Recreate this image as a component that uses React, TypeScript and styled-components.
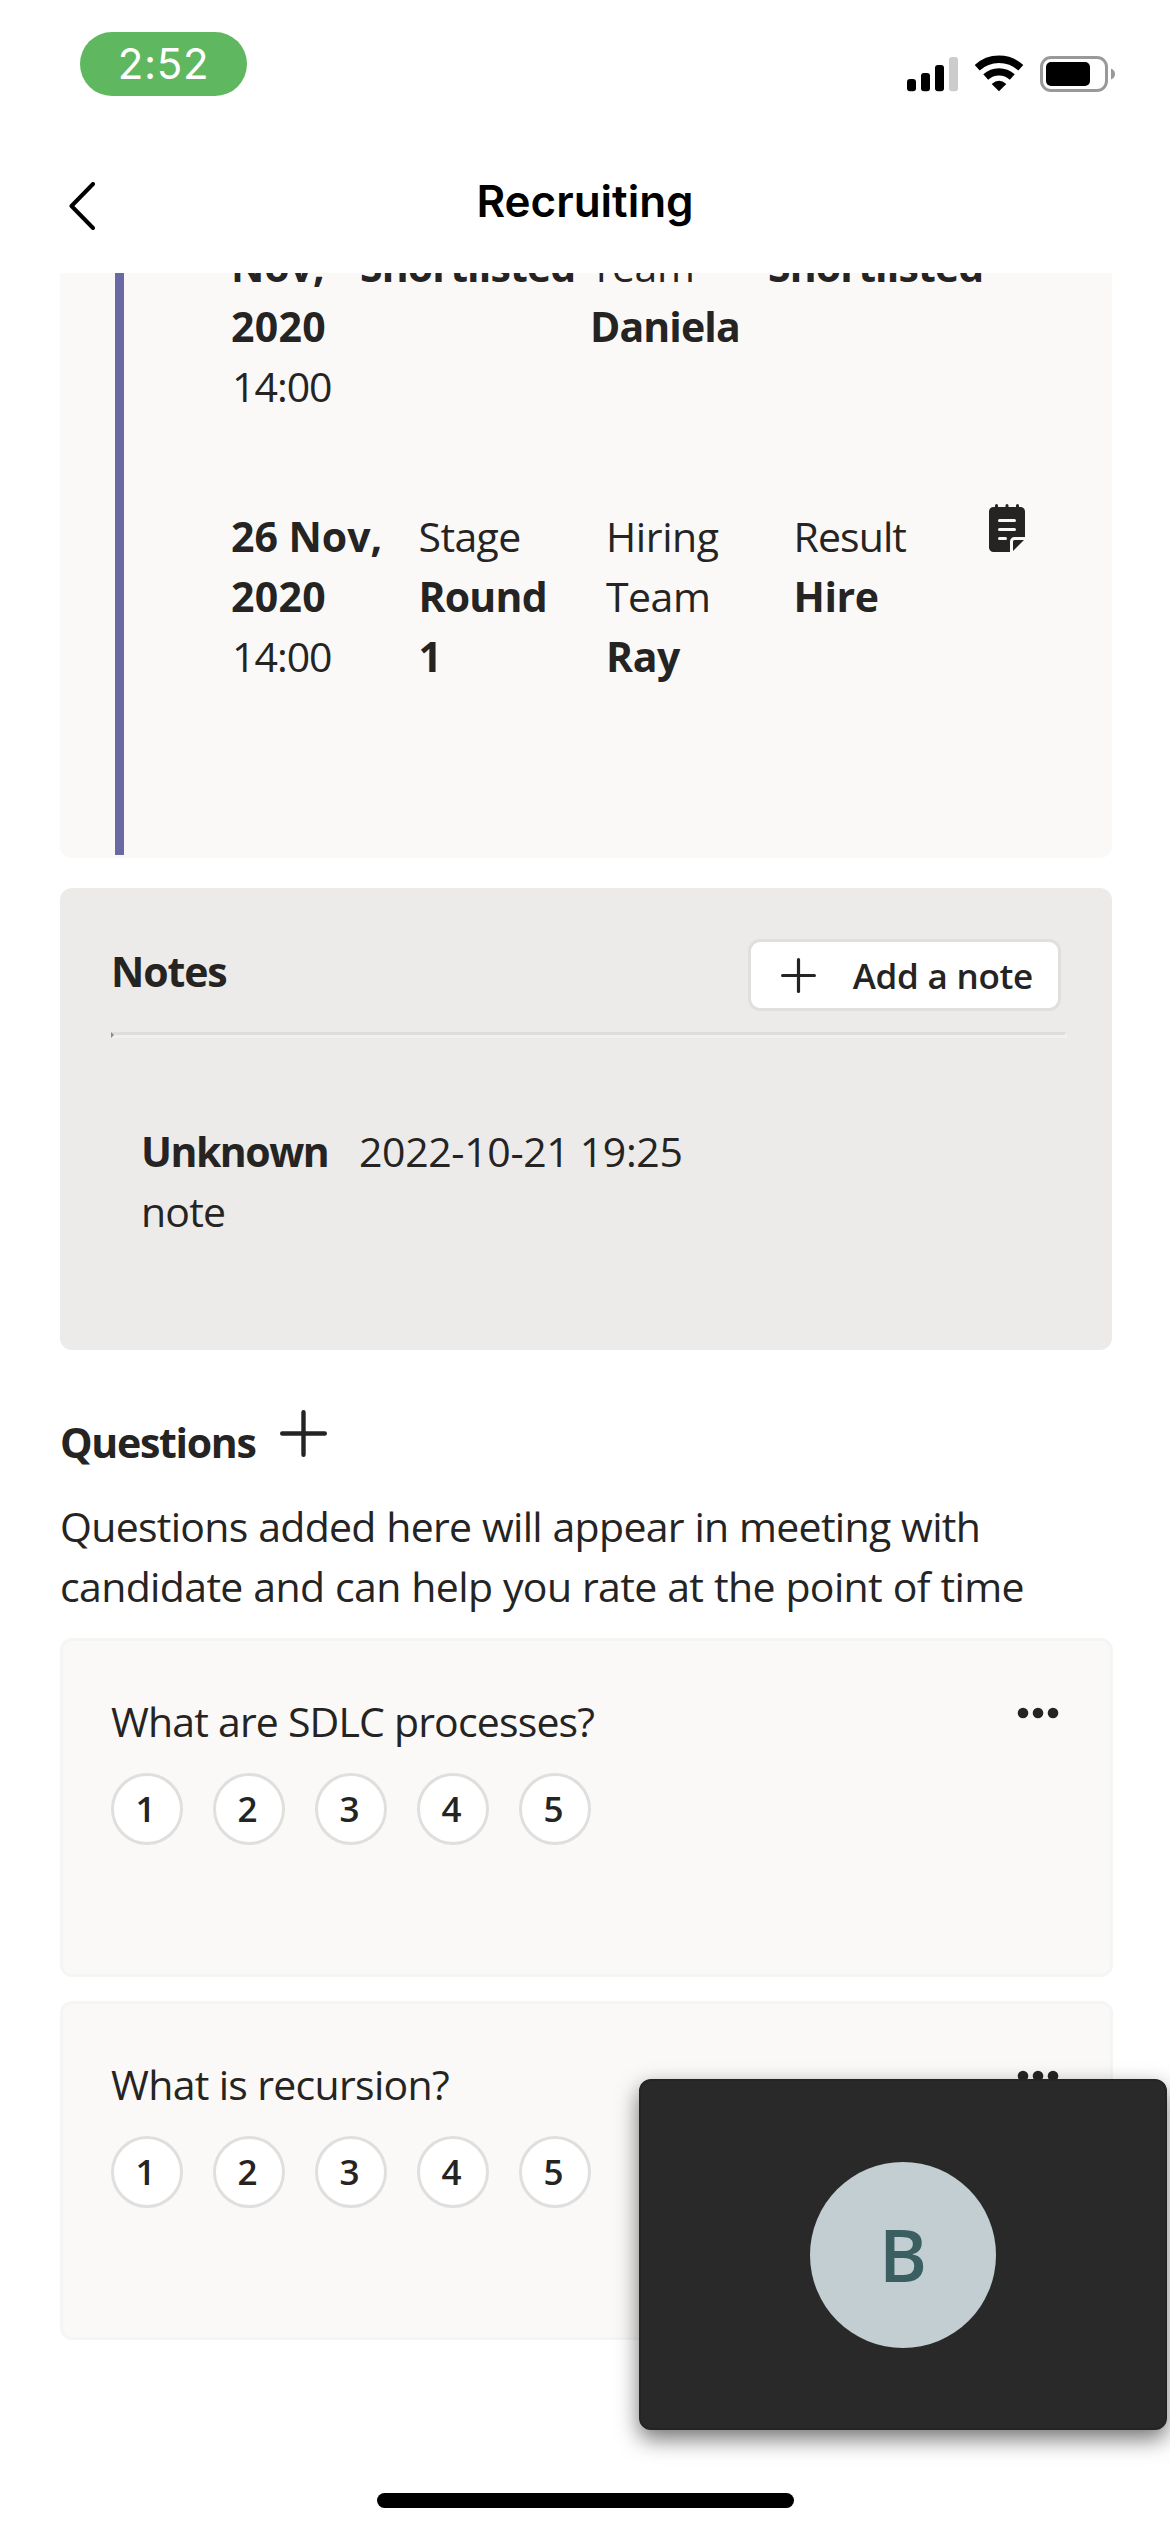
import React from 'react';
import styled, { createGlobalStyle } from 'styled-components';

const GlobalStyle = createGlobalStyle`
  *, *::before, *::after { box-sizing: border-box; }
  body { margin: 0; background: #fff; }
`;

const Screen = styled.div`
  position: relative;
  width: 1170px;
  height: 2532px;
  overflow: hidden;
  display: flex;
  flex-direction: column;
  background: #fff;
  color: #252423;
  font-family: 'Open Sans', 'Noto Sans', sans-serif;
  font-size: 41px;
  line-height: 60px;
`;

const StatusBar = styled.header`
  flex: none;
  height: 141px;
  padding: 32px 54px 0 80px;
  display: flex;
  justify-content: space-between;
`;

const TimePill = styled.div`
  width: 167px;
  height: 64px;
  border-radius: 32px;
  background: #5fb760;
  color: #fff;
  font: 400 42px/64px Inter, sans-serif;
  text-align: center;
  letter-spacing: 0.6px;
`;

const StatusIcons = styled.svg`
  width: 210px;
  height: 40px;
  margin-top: 22px;
`;

const NavBar = styled.nav`
  flex: none;
  height: 132px;
  padding: 0 69px;
  display: grid;
  grid-template-columns: 60px 1fr 60px;
`;

const BackIcon = styled.svg`
  width: 26px;
  height: 48px;
  margin-top: 41px;
`;

const Title = styled.h1`
  margin: 30px 0 0;
  text-align: center;
  color: #000;
  font: 600 44px/60px Inter, sans-serif;
`;

const Content = styled.main`
  flex: 1;
  min-height: 0;
  overflow: hidden;
  padding: 0 57px 0 60px;
  display: flex;
  flex-direction: column;
`;

const Timeline = styled.section`
  flex: none;
  width: 1052px;
  height: 585px;
  padding: 0 0 3px 55px;
  overflow: hidden;
  border-radius: 0 0 12px 12px;
  background: #faf9f8;
  display: flex;
`;

const Rail = styled.div`
  flex: none;
  width: 9px;
  background: #6b69a4;
`;

const Entries = styled.div`
  flex: 1;
  padding-left: 107px;
  display: flex;
  flex-direction: column;
  margin-top: -37px;
  gap: 90px;
`;

const Entry = styled.div<{ $columns: string }>`
  display: grid;
  grid-template-columns: ${(p) => p.$columns};
  white-space: nowrap;
`;

const Cell = styled.div`
  display: flex;
  flex-direction: column;
`;

const Text = styled.span<{ $bold?: boolean; $track?: number }>`
  font-weight: ${(p) => (p.$bold ? 700 : 400)};
  letter-spacing: ${(p) => p.$track ?? 0}px;
  white-space: nowrap;
`;

const Time = styled(Text)`
  padding-left: 1px;
`;

const NoteIcon = styled.svg`
  width: 36px;
  height: 48px;
  margin: -2px 0 0 8px;
`;

const Notes = styled.section`
  flex: none;
  width: 1052px;
  height: 462px;
  margin-top: 30px;
  padding: 51px 45px 0 51px;
  border-radius: 12px;
  background: #ecebe9;
`;

const NotesHeader = styled.div`
  display: flex;
  justify-content: space-between;
  padding-right: 6px;
  height: 93px;
`;

const NotesTitle = styled.h2`
  margin: 2px 0 0;
  font-size: 41px;
  font-weight: 700;
  line-height: 60px;
  letter-spacing: -1.1px;
`;

const AddButton = styled.button`
  width: 313px;
  height: 72px;
  padding: 0 25px 0 30px;
  border: 3px solid #e1dfdd;
  border-radius: 12px;
  background: #fff;
  color: #252423;
  display: flex;
  align-items: center;
  justify-content: space-between;
  font: 600 35px/48px 'Open Sans', sans-serif;
  letter-spacing: -0.25px;
  white-space: nowrap;
`;

const AddLabel = styled.span`
  padding-top: 2px;
`;

const PlusIcon = styled.svg<{ $size: number }>`
  flex: none;
  width: ${(p) => p.$size}px;
  height: ${(p) => p.$size}px;
`;

const Rule = styled.hr`
  margin: 0;
  height: 6px;
  border: 3px solid;
  border-color: #dfdddc #f1f0ef #f1f0ef #8c8b8a;
`;

const NoteItem = styled.div`
  padding: 83px 0 0 30px;
`;

const NoteMeta = styled.div`
  display: grid;
  grid-template-columns: 218px 1fr;
`;

const QuestionsHeader = styled.div`
  flex: none;
  height: 86px;
  margin-top: 60px;
  display: flex;
  align-items: flex-start;
`;

const QuestionsTitle = styled.h2`
  width: 220px;
  margin: 2px 0 0;
  font-size: 41px;
  font-weight: 700;
  line-height: 60px;
  letter-spacing: -1.3px;
`;

const Hint = styled.p`
  flex: none;
  margin: 0 0 22px;
  display: flex;
  flex-direction: column;
  word-spacing: 0.6px;
`;

const QuestionCard = styled.section`
  flex: none;
  width: 1053px;
  height: 339px;
  margin-bottom: 24px;
  padding: 50px 51px 0 48px;
  border: 3px solid #f5f5f4;
  border-radius: 12px;
  background: #faf9f8;
`;

const QuestionRow = styled.div`
  display: flex;
  justify-content: space-between;
  height: 82px;
`;

const MoreIcon = styled.svg`
  width: 42px;
  height: 12px;
  margin-top: 16px;
`;

const Ratings = styled.div`
  display: flex;
  gap: 30px;
`;

const Rating = styled.button`
  width: 72px;
  height: 72px;
  padding: 0 3px 0 0;
  border: 3px solid #e1dfdd;
  border-radius: 50%;
  background: #fff;
  color: #252423;
  font: 600 35px/66px 'Open Sans', sans-serif;
`;

const CallTile = styled.aside`
  position: absolute;
  left: 639px;
  top: 2079px;
  width: 528px;
  height: 351px;
  border: 2px solid #242424;
  border-radius: 12px;
  background: #292929;
  box-shadow: 0 9px 22px rgba(0, 0, 0, 0.55);
  display: flex;
  align-items: center;
  justify-content: center;
`;

const Avatar = styled.div`
  width: 186px;
  height: 186px;
  border-radius: 50%;
  background: #c2ced2;
  color: #3b5e61;
  font: 600 73px/183px 'Open Sans', sans-serif;
  text-align: center;
`;

const HomeIndicator = styled.div`
  position: absolute;
  left: 377px;
  top: 2493px;
  width: 417px;
  height: 15px;
  border-radius: 8px;
  background: #000;
`;

function Plus({ size, stroke }: { size: number; stroke: number }) {
  const mid = size / 2;
  const end = size - stroke / 2;
  return (
    <PlusIcon $size={size} viewBox={`0 0 ${size} ${size}`}>
      <path
        d={`M${mid} ${stroke / 2}V${end}M${stroke / 2} ${mid}H${end}`}
        stroke="#252423"
        strokeWidth={stroke}
        strokeLinecap="round"
      />
    </PlusIcon>
  );
}

function Question({ text, track }: { text: string; track: number }) {
  return (
    <QuestionCard>
      <QuestionRow>
        <Text $track={track}>{text}</Text>
        <MoreIcon viewBox="0 0 42 12" fill="#252423">
          <circle cx="6" cy="6" r="5.3" />
          <circle cx="21" cy="6" r="5.3" />
          <circle cx="36" cy="6" r="5.3" />
        </MoreIcon>
      </QuestionRow>
      <Ratings>
        {[1, 2, 3, 4, 5].map((n) => (
          <Rating key={n}>{n}</Rating>
        ))}
      </Ratings>
    </QuestionCard>
  );
}

export default function App() {
  return (
    <Screen>
      <GlobalStyle />
      <StatusBar>
        <TimePill>2:52</TimePill>
        <StatusIcons viewBox="906 54 210 40">
          <rect x="907" y="79" width="9" height="12.3" rx="3" />
          <rect x="921" y="73" width="9" height="18.3" rx="3" />
          <rect x="935" y="65" width="9" height="26.3" rx="3" />
          <rect x="949" y="57" width="9" height="34.3" rx="3" fill="#ccc" />
          <path d="M977.2 67.8A32.200 32.200 0 0 1 1020.800 67.800" fill="none" stroke="#000" strokeWidth="7.4" />
          <path d="M985.7 77A19.700 19.700 0 0 1 1012.300 77" fill="none" stroke="#000" strokeWidth="7.2" />
          <path d="M999 91.200L991.700 84Q999 77.500 1006.300 84Z" />
          <rect x="1041.500" y="57.500" width="65" height="33" rx="9.500" fill="none" stroke="#999" strokeWidth="3" />
          <rect x="1046" y="62" width="44" height="24" rx="5" />
          <path d="M1111 68.500Q1115 70 1115 74Q1115 78 1111 79.500Z" fill="#999" />
        </StatusIcons>
      </StatusBar>
      <NavBar>
        <BackIcon viewBox="0 0 26 48">
          <path d="M24 2L2.500 24L24 46" fill="none" stroke="#000" strokeWidth="4" strokeLinecap="round" strokeLinejoin="round" />
        </BackIcon>
        <Title>Recruiting</Title>
      </NavBar>
      <Content>
        <Timeline>
          <Rail />
          <Entries>
            <Entry $columns="129px 230px 178px 1fr">
              <Cell>
                <Text $bold>Nov,</Text>
                <Text $bold $track={0.3}>2020</Text>
                <Time $track={-1}>14:00</Time>
              </Cell>
              <Cell>
                <Text $bold $track={-0.85}>Shortlisted</Text>
              </Cell>
              <Cell>
                <Text $track={-0.5}>Team</Text>
                <Text $bold $track={-0.9}>Daniela</Text>
              </Cell>
              <Cell>
                <Text $bold $track={-0.85}>Shortlisted</Text>
              </Cell>
            </Entry>
            <Entry $columns="187.5px 187.5px 187.5px 187.5px 1fr">
              <Cell>
                <Text $bold>26 Nov,</Text>
                <Text $bold $track={0.3}>2020</Text>
                <Time $track={-1}>14:00</Time>
              </Cell>
              <Cell>
                <Text $track={-0.6}>Stage</Text>
                <Text $bold $track={-0.8}>Round</Text>
                <Text $bold>1</Text>
              </Cell>
              <Cell>
                <Text $track={-0.4}>Hiring</Text>
                <Text $track={-0.5}>Team</Text>
                <Text $bold $track={-0.4}>Ray</Text>
              </Cell>
              <Cell>
                <Text $track={-0.9}>Result</Text>
                <Text $bold $track={-0.4}>Hire</Text>
              </Cell>
              <NoteIcon viewBox="0 0 36 48">
                <path
                  d="M7.500 0a1.500 1.500 0 0 1 1.500 1.500V3h7.500V1.500a1.500 1.500 0 0 1 3 0V3H27V1.500a1.500 1.500 0 0 1 3 0V3h1.500A4.500 4.500 0 0 1 36 7.500V33H25.500a4.500 4.500 0 0 0-4.500 4.500V48H4.500A4.500 4.500 0 0 1 0 43.500v-36A4.500 4.500 0 0 1 4.500 3H6V1.500A1.500 1.500 0 0 1 7.500 0ZM35 36L24 47V37.500a1.500 1.500 0 0 1 1.500-1.500Z"
                  fill="#252423"
                />
                <path d="M10.500 16.500H25.500M10.500 25.500H25.500M10.500 34.500H16.500" stroke="#faf9f8" strokeWidth="3" strokeLinecap="round" />
              </NoteIcon>
            </Entry>
          </Entries>
        </Timeline>
        <Notes>
          <NotesHeader>
            <NotesTitle>Notes</NotesTitle>
            <AddButton>
              <Plus size={35} stroke={3.2} />
              <AddLabel>Add a note</AddLabel>
            </AddButton>
          </NotesHeader>
          <Rule />
          <NoteItem>
            <NoteMeta>
              <Text $bold $track={-1.5}>Unknown</Text>
              <Text $track={-0.35}>2022-10-21 19:25</Text>
            </NoteMeta>
            <Text $track={-0.8}>note</Text>
          </NoteItem>
        </Notes>
        <QuestionsHeader>
          <QuestionsTitle>Questions</QuestionsTitle>
          <Plus size={47} stroke={4.4} />
        </QuestionsHeader>
        <Hint>
          <Text $track={-0.7}>Questions added here will appear in meeting with</Text>
          <Text $track={-0.64}>candidate and can help you rate at the point of time</Text>
        </Hint>
        <Question text="What are SDLC processes?" track={-0.82} />
        <Question text="What is recursion?" track={-0.68} />
      </Content>
      <CallTile>
        <Avatar>B</Avatar>
      </CallTile>
      <HomeIndicator />
    </Screen>
  );
}
